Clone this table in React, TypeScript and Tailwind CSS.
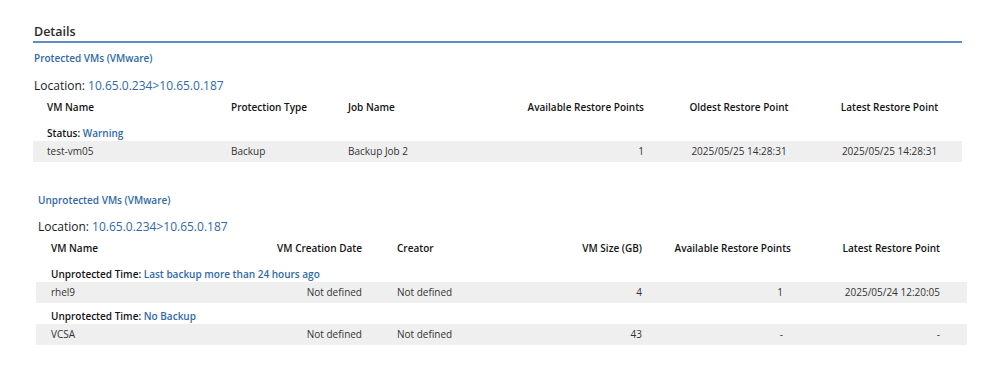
const BLUE = "text-[#2f6aa6]";

function Location() {
  return (
    <span className="text-[12px] font-medium text-[#1a1a1a]">
      Location: <span className={BLUE}>10.65.0.234&gt;10.65.0.187</span>
    </span>
  );
}

function Protected() {
  const cols = "grid grid-cols-[184px_117px_150px_146px_190px_111px]";
  return (
    <div className="pl-[33px] pr-[29px]">
      <div className="mt-[23px] h-[20px] flex items-center pl-[1px] border-b-2 border-[#5b8ec3] text-[12.5px] font-semibold text-[#2b2b2b]">
        Details
      </div>
      <div className={`h-[30px] flex items-center pl-[1px] text-[10px] font-semibold ${BLUE}`}>
        Protected VMs (VMware)
      </div>
      <div className="h-[26px] flex items-center pl-[1px]">
        <Location />
      </div>
      <div className={`${cols} h-[16px] items-center pl-[14px] text-[10px] font-semibold text-[#141414]`}>
        <span>VM Name</span>
        <span>Protection Type</span>
        <span>Job Name</span>
        <span className="text-right">Available Restore Points</span>
        <span className="text-center">Oldest Restore Point</span>
        <span className="text-center">Latest Restore Point</span>
      </div>
      <div className="h-[26px] pt-[11px] pl-[14px] text-[10px] font-semibold text-[#141414]">
        Status: <span className={BLUE}>Warning</span>
      </div>
      <div className={`${cols} h-[21px] items-center pl-[14px] bg-[#efefef] text-[10px] text-[#333]`}>
        <span>test-vm05</span>
        <span>Backup</span>
        <span>Backup Job 2</span>
        <span className="text-right">1</span>
        <span className="text-center">2025/05/25 14:28:31</span>
        <span className="text-center">2025/05/25 14:28:31</span>
      </div>
    </div>
  );
}

function Unprotected() {
  const cols = "grid grid-cols-[149px_162px_35px_103px_142px_149px_149px]";
  const rows = [
    { time: "Last backup more than 24 hours ago", name: "rhel9", size: "4", points: "1", latest: "2025/05/24 12:20:05" },
    { time: "No Backup", name: "VCSA", size: "43", points: "-", latest: "-" },
  ];
  return (
    <div className="mt-[24px] pl-[36px] pr-[24px]">
      <div className={`h-[28px] flex items-center pl-[2px] text-[10px] font-semibold ${BLUE}`}>
        Unprotected VMs (VMware)
      </div>
      <div className="h-[26px] flex items-center pl-[2px]">
        <Location />
      </div>
      <div className={`${cols} h-[16px] items-center pl-[15px] text-[10px] font-semibold text-[#141414]`}>
        <span>VM Name</span>
        <span className="text-right">VM Creation Date</span>
        <span />
        <span>Creator</span>
        <span className="text-right">VM Size (GB)</span>
        <span className="text-right">Available Restore Points</span>
        <span className="text-right">Latest Restore Point</span>
      </div>
      {rows.map((r, i) => (
        <div key={r.name}>
          <div
            className={`${i === 0 ? "h-[26px] pt-[11px]" : "h-[21px] pt-[6px]"} pl-[15px] text-[10px] font-semibold text-[#141414]`}
          >
            Unprotected Time: <span className={BLUE}>{r.time}</span>
          </div>
          <div className={`${cols} h-[21px] items-center pl-[15px] bg-[#efefef] text-[10px] text-[#333]`}>
            <span>{r.name}</span>
            <span className="text-right">Not defined</span>
            <span />
            <span>Not defined</span>
            <span className="text-right">{r.size}</span>
            <span className="text-right pr-[8px]">{r.points}</span>
            <span className="text-right">{r.latest}</span>
          </div>
        </div>
      ))}
    </div>
  );
}

export default function App() {
  return (
    <div className="w-[991px] h-[388px] bg-white overflow-hidden" style={{ fontFamily: '"Open Sans", "Noto Sans", sans-serif' }}>
      <Protected />
      <Unprotected />
    </div>
  );
}
